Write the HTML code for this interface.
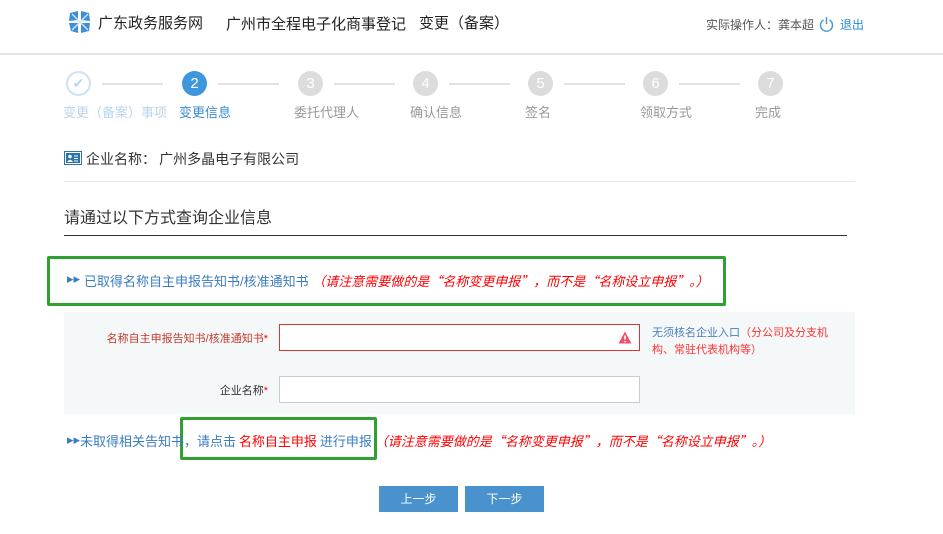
<!DOCTYPE html>
<html><head><meta charset="utf-8"><style>
*{margin:0;padding:0;box-sizing:border-box}
body{width:943px;height:534px;background:#fff;font-family:"Liberation Sans","Noto Sans CJK SC",sans-serif;position:relative;overflow:hidden;color:#333}
.a{position:absolute;white-space:nowrap}
.hd{position:absolute;left:0;top:0;width:943px;height:55px;background:#fff;border-bottom:2px solid #e4e4e4}
.c{position:absolute;width:25px;height:25px;border-radius:50%;top:71px;color:#fff;font-size:15px;text-align:center;line-height:25px;background:#dcdcdc}
.ln{position:absolute;top:83px;height:2px;background:#e2e2e2;width:61px}
.lb{position:absolute;top:102px;font-size:13px;color:#999;white-space:nowrap}
.cj{font-family:"Noto Sans CJK SC",sans-serif}
</style></head><body>
<div class="hd"></div>
<svg class="a" style="left:68px;top:10px" width="24" height="24" viewBox="0 0 24 24"><path d="M2 3 L10 1 L10 10 L1 11 Z M13 1 L21 3 L22 11 L13 10 Z M1 13 L10 13 L10 23 L3 21 Z M13 13 L22 13 L21 21 L13 23 Z" fill="#3d8fd8"/><path d="M4 4 L20 20 M20 4 L4 20" stroke="#cfe6fa" stroke-width="1.4"/></svg>
<div class="a" style="left:98px;top:12px;font-size:15px;color:#222">广东政务服务网</div>
<div class="a" style="left:226px;top:13px;font-size:15px;color:#222">广州市全程电子化商事登记</div>
<div class="a cj" style="left:419px;top:12px;font-size:15px;color:#222">变更（备案）</div>
<div class="a" style="left:706px;top:16px;font-size:12px;color:#555">实际操作人：龚本超</div>
<svg class="a" style="left:819px;top:16px" width="15" height="16" viewBox="0 0 15 16"><path d="M4.5 4 A6 6 0 1 0 10.5 4" fill="none" stroke="#4a9ad6" stroke-width="1.5"/><path d="M7.5 1 V8" stroke="#4a9ad6" stroke-width="1.5"/></svg>
<div class="a" style="left:840px;top:16px;font-size:12px;color:#2a8ad4">退出</div>

<div class="c" style="left:66px;background:#fff;border:2px solid #cfe2f3;color:#bcd7ee;line-height:21px;font-size:14px">✔</div>
<div class="ln" style="left:102px"></div>
<div class="c" style="left:182px;background:#3e96dc">2</div>
<div class="ln" style="left:218px"></div>
<div class="c" style="left:298px">3</div>
<div class="ln" style="left:334px"></div>
<div class="c" style="left:413px">4</div>
<div class="ln" style="left:449px"></div>
<div class="c" style="left:528px">5</div>
<div class="ln" style="left:564px"></div>
<div class="c" style="left:643px">6</div>
<div class="ln" style="left:679px"></div>
<div class="c" style="left:758px">7</div>
<div class="lb cj" style="left:63px;color:#b8d5ee">变更（备案）事项</div>
<div class="lb" style="left:179px;color:#3a8ad0">变更信息</div>
<div class="lb" style="left:294px">委托代理人</div>
<div class="lb" style="left:410px">确认信息</div>
<div class="lb" style="left:525px">签名</div>
<div class="lb" style="left:640px">领取方式</div>
<div class="lb" style="left:755px">完成</div>

<svg class="a" style="left:64px;top:151px" width="18" height="14" viewBox="0 0 18 14"><rect x="0.5" y="0.5" width="17" height="13" fill="#fff" stroke="#2a73a8"/><rect x="2" y="2" width="14" height="10" fill="#2a73a8"/><circle cx="6" cy="5.5" r="1.8" fill="#fff"/><path d="M3 11 Q6 6.5 9 11Z" fill="#fff"/><path d="M10 5h4M10 7.5h4M10 10h4" stroke="#fff"/></svg>
<div class="a cj" style="left:86px;top:149px;font-size:14px;color:#333">企业名称： 广州多晶电子有限公司</div>
<div class="a" style="left:64px;top:181px;width:791px;height:1px;background:#e8e8e8"></div>
<div class="a" style="left:64px;top:204px;font-size:16px;color:#333">请通过以下方式查询企业信息</div>
<div class="a" style="left:64px;top:235px;width:783px;height:1px;background:#333"></div>

<div class="a" style="left:47px;top:256px;width:679px;height:50px;border:3px solid #2ea12e;border-radius:2px"></div>
<div class="a" style="left:67px;top:271px;font-size:13px;color:#3a7cc0">▸▸</div>
<div class="a" style="left:84px;top:271px;font-size:13px;color:#3a7cc0">已取得名称自主申报告知书/核准通知书 <span class="cj" style="color:#f00;font-style:italic">（请注意需要做的是“名称变更申报”，而不是“名称设立申报”。）</span></div>

<div class="a" style="left:64px;top:312px;width:791px;height:102px;background:#f5f8f9"></div>
<div class="a" style="left:64px;top:330px;width:204px;text-align:right;font-size:11px;color:#c0392b">名称自主申报告知书/核准通知书<span style="color:#f00">*</span></div>
<div class="a" style="left:279px;top:324px;width:361px;height:27px;border:1px solid #d33;background:#fff"></div>
<svg class="a" style="left:618px;top:331px" width="14" height="13" viewBox="0 0 14 13"><path d="M7 0.5 L13.5 12.5 H0.5Z" fill="#f0506e"/><path d="M7 4.5V8.5M7 10v1.2" stroke="#fff" stroke-width="1.6"/></svg>
<div class="a cj" style="left:652px;top:324px;font-size:11px;line-height:17px;color:#4a7fb8;white-space:normal;width:185px">无须核名企业入口<span style="color:#f33">（分公司及分支机构、常驻代表机构等）</span></div>
<div class="a" style="left:64px;top:382px;width:204px;text-align:right;font-size:11px;color:#333">企业名称<span style="color:#f00">*</span></div>
<div class="a" style="left:279px;top:376px;width:361px;height:27px;border:1px solid #ccc;background:#fff"></div>

<div class="a" style="left:180px;top:417px;width:197px;height:43px;border:3px solid #2ea12e;border-radius:2px"></div>
<div class="a" style="left:67px;top:432px;font-size:13px;color:#3a7cc0">▸▸</div>
<div class="a cj" style="left:80px;top:431px;font-size:13px;color:#3a7cc0">未取得相关告知书，请点击 <span style="color:#f00">名称自主申报</span> 进行申报 <span style="color:#f00;font-style:italic">（请注意需要做的是“名称变更申报”，而不是“名称设立申报”。）</span></div>

<div class="a" style="left:379px;top:486px;width:79px;height:26px;background:#4a92cd;color:#fff;font-size:12px;text-align:center;line-height:26px">上一步</div>
<div class="a" style="left:465px;top:486px;width:79px;height:26px;background:#4a92cd;color:#fff;font-size:12px;text-align:center;line-height:26px">下一步</div>
</body></html>
